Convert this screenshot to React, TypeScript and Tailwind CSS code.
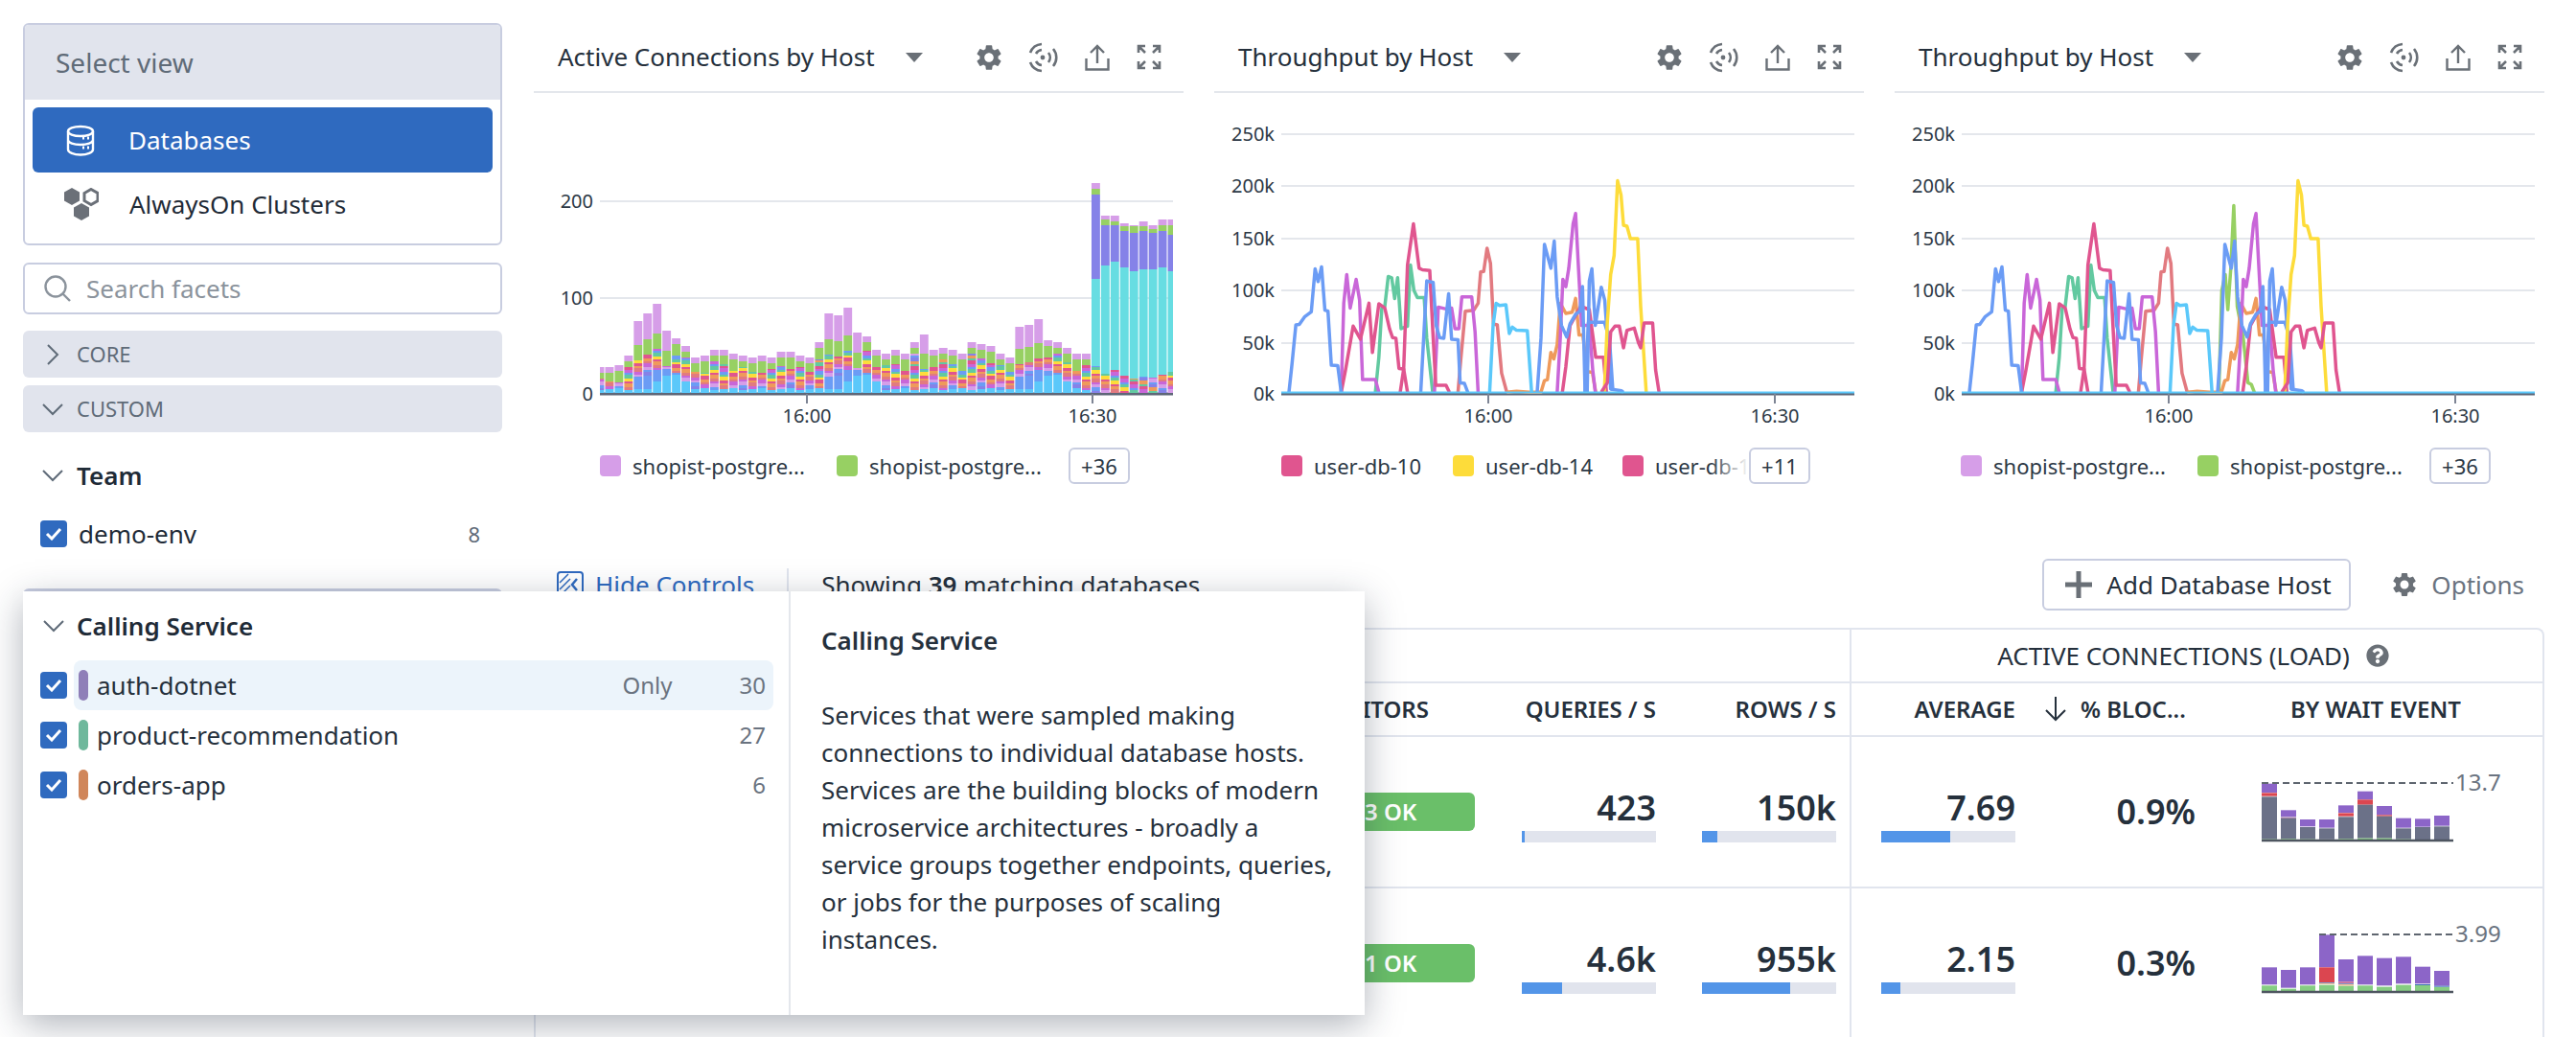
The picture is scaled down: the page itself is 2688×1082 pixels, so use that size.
import { FaQuestionCircle } from "react-icons/fa";
import { MdSettings } from "react-icons/md";

const c = {
  pink: "#d69ee8",
  green: "#97d063",
  teal: "#62c9a0",
  rose: "#e0558f",
  orange: "#ef9a5b",
  yellow: "#fddc3a",
  salmon: "#e27a80",
  purple: "#c966d8",
  blue: "#6b9cf5",
  sky: "#5bc8fa",
  indigo: "#8582e8",
  cyan: "#67dde2",
};

const totals = [
  27, 27, 29, 39, 75, 83, 93, 65, 57, 49, 37, 39, 45, 45, 41, 39, 37, 39, 37, 43, 43, 39, 37, 53, 83, 81, 89, 63, 59, 45,
  41, 45, 41, 53, 61, 45, 47, 45, 41, 53, 51, 49, 41, 37, 69, 71, 77, 55, 53, 47, 41, 41,
];

// teal top, indigo top, green top, total of the spike at the end of the chart
const spikes = [
  [119, 207, 213, 219, 28],
  [133, 175, 181, 185, 20],
  [137, 175, 179, 185, 24],
  [131, 169, 174, 177, 18],
  [127, 167, 174, 175, 15],
  [129, 169, 174, 179, 17],
  [129, 167, 171, 175, 16],
  [131, 169, 175, 181, 19],
  [127, 165, 175, 181, 22],
];

const strips = [c.indigo, c.blue, c.pink, c.purple, c.salmon, c.orange, c.rose, c.yellow, c.teal, c.blue, c.purple, c.rose, c.teal, c.orange];

type Seg = { h: number; color: string };

const blocks: Record<number, Seg[]> = {
  0: [{ h: 4, color: c.sky }, { h: 13, color: c.blue }],
  1: [{ h: 4, color: c.sky }, { h: 14, color: c.blue }],
  2: [{ h: 12, color: c.sky }, { h: 12, color: c.blue }],
  3: [{ h: 18, color: c.sky }, { h: 3, color: c.blue }],
  4: [{ h: 19, color: c.sky }, { h: 2, color: c.blue }],
  5: [{ h: 12, color: c.sky }],
};

function stack(i: number, total: number): Seg[] {
  const top = total >= 60 ? Math.round(total * 0.33) : 6;
  const green = total >= 60 ? 16 : 6 + (i % 3) * 3;
  const out: Seg[] = [];
  let left = total - top - green;
  const block = blocks[i % 20 >= 4 ? (i % 20) - 4 : 99];
  if (block) {
    block.forEach((s) => {
      out.push(s);
      left -= s.h;
    });
  } else {
    out.push({ h: 3 + (i % 3), color: c.sky });
    left -= 3 + (i % 3);
  }
  let n = (i * 3) % 5;
  while (left > 0) {
    const h = Math.min(left, 2 + ((i + n) * 7) % 3);
    out.push({ h, color: strips[n % strips.length] });
    left -= h;
    n++;
  }
  out.push({ h: green, color: c.green }, { h: top, color: c.pink });
  return out;
}

function spikeStack(i: number, s: number[]): Seg[] {
  const out: Seg[] = [];
  let left = s[4];
  let n = i * 2;
  while (left > 0) {
    const h = Math.min(left, 2 + (n * 5) % 3);
    out.push({ h, color: strips[n % strips.length] });
    left -= h;
    n++;
  }
  out.push(
    { h: s[0] - s[4], color: c.cyan },
    { h: s[1] - s[0], color: c.indigo },
    { h: s[2] - s[1], color: c.green },
    { h: s[3] - s[2], color: c.pink },
  );
  return out;
}

const base = 314;

function Axis({ left, right, grid, labels, ticks }: { left: number; right: number; grid: number[]; labels: string[]; ticks: number[] }) {
  return (
    <>
      {grid.map((y, i) => (
        <g key={y}>
          <line x1={left} x2={right} y1={y} y2={y} stroke="#e4e7ec" strokeWidth="2" />
          <text x={left - 7} y={y + 7} textAnchor="end" className="fill-[#2c3845] text-[20px]">
            {labels[i]}
          </text>
        </g>
      ))}
      <text x={left - 7} y={base + 7} textAnchor="end" className="fill-[#2c3845] text-[20px]">
        {labels[labels.length - 1]}
      </text>
      <line x1={left} x2={right} y1={base} y2={base} stroke="#5f6778" strokeWidth="3" />
      {ticks.map((x, i) => (
        <g key={x}>
          <line x1={x} x2={x} y1={base} y2={base + 10} stroke="#7d8494" strokeWidth="2" />
          <text x={x} y={base + 30} textAnchor="middle" className="fill-[#2c3845] text-[20px]">
            {i === 0 ? "16:00" : "16:30"}
          </text>
        </g>
      ))}
    </>
  );
}

function BarChart() {
  const all = [...totals.map((t, i) => stack(i, t)), ...spikes.map((s, i) => spikeStack(i, s))];
  return (
    <svg className="block" width="678" height="370">
      <Axis left={69} right={667} grid={[113, 214]} labels={["200", "100", "0"]} ticks={[285, 583]} />
      <clipPath id="plot">
        <rect x="69" y="0" width="598" height="313" />
      </clipPath>
      <g clipPath="url(#plot)">
        {all.map((segs, i) => {
          const x = 74.5 + (i - 1) * 9.95;
          let y = 313;
          return (
            <g key={i}>
              {segs.map((s, j) => {
                y -= s.h;
                return <rect key={j} x={x} y={y} width="8.9" height={s.h} fill={s.color} />;
              })}
            </g>
          );
        })}
      </g>
    </svg>
  );
}

// series traced in a 2.24 x 3.012 scaled space, mapped into the plot below
const lines: { color: string; pts: number[] }[] = [
  { color: "#e27a80", pts: [563, 1170, 570, 1060, 580, 915, 600, 912, 610, 890, 616, 792, 623, 790, 631, 717, 639, 765, 646, 955, 655, 958, 665, 1110, 677, 1170] },
  { color: "#ef9a5b", pts: [677, 1170, 700, 1167, 730, 1170, 757, 1170, 765, 1133, 772, 1130, 780, 1045, 787, 1065, 795, 1020, 802, 890, 815, 922, 830, 918, 838, 875, 846, 990, 855, 990, 865, 1105, 877, 1107, 885, 1170] },
  { color: "#62c9a0", pts: [370, 1170, 378, 1060, 385, 905, 392, 900, 400, 806, 408, 810, 415, 875, 422, 810, 430, 970, 445, 962, 452, 770, 460, 850, 468, 872, 484, 872, 490, 1000, 504, 1170] },
  { color: "#c966d8", pts: [290, 1170, 296, 890, 303, 800, 311, 905, 325, 815, 333, 880, 340, 1130, 370, 1130, 378, 1170] },
  { color: "#c966d8", pts: [508, 1170, 517, 902, 535, 908, 548, 905, 556, 970, 565, 970, 572, 870, 595, 870, 603, 980, 610, 1170] },
  { color: "#c966d8", pts: [795, 1170, 802, 1000, 808, 815, 815, 838, 822, 780, 832, 640, 838, 608, 845, 790, 852, 960, 870, 960, 878, 1100, 884, 1170] },
  { color: "#e0558f", pts: [290, 1170, 300, 1100, 318, 962, 335, 1003, 355, 890, 363, 1045, 378, 892, 392, 905, 403, 970, 410, 998, 418, 1000, 425, 1095, 436, 1097, 445, 1170] },
  { color: "#e0558f", pts: [428, 1170, 436, 1097, 445, 770, 459, 640, 472, 780, 480, 785, 497, 787, 505, 1000, 511, 1148, 535, 1148, 543, 1170] },
  { color: "#e0558f", pts: [807, 1170, 815, 1090, 825, 960, 850, 900, 870, 910, 885, 1060, 903, 1060, 910, 1170] },
  { color: "#5bc8fa", pts: [637, 1170, 645, 960, 652, 890, 660, 897, 675, 895, 683, 985, 690, 965, 700, 975, 725, 976, 735, 1170] },
  { color: "#6b9cf5", pts: [168, 1170, 175, 1080, 184, 958, 192, 957, 205, 932, 220, 917, 229, 782, 236, 822, 244, 776, 252, 912, 259, 915, 267, 1085, 282, 1086, 290, 1170] },
  { color: "#6b9cf5", pts: [476, 1170, 490, 820, 505, 825, 512, 960, 520, 998, 530, 1000, 541, 860, 548, 1003, 563, 1005, 568, 1140, 578, 1142, 586, 1170] },
  { color: "#6b9cf5", pts: [748, 1170, 757, 1000, 765, 705, 780, 780, 788, 695, 795, 870, 805, 960, 817, 996, 825, 955, 838, 925, 848, 915, 854, 838, 860, 1170] },
  { color: "#6b9cf5", pts: [865, 1170, 870, 820, 876, 782, 884, 960, 898, 840, 906, 880, 915, 1050, 920, 1160, 945, 1165, 950, 1170] },
  { color: "#6b9cf5", pts: [860, 1170, 868, 950, 905, 950, 917, 1000, 925, 1165] },
  { color: "#fddc3a", pts: [905, 1170, 912, 950, 920, 800, 928, 740, 936, 505, 944, 550, 950, 645, 958, 648, 966, 687, 983, 687, 990, 900, 1003, 1170] },
  { color: "#e0558f", pts: [898, 1170, 912, 1140, 920, 980, 930, 962, 940, 962, 950, 1030, 958, 975, 975, 968, 985, 1015, 990, 1030, 998, 952, 1018, 952, 1025, 1100, 1033, 1170] },
];

const extraGreen = [751, 1170, 758, 850, 766, 800, 772, 910, 779, 780, 786, 583, 794, 900, 808, 1000, 819, 1140, 827, 1145, 834, 1170];

function toPoints(pts: number[]) {
  const out: string[] = [];
  for (let i = 0; i < pts.length; i += 2) {
    out.push(`${(70 + (pts[i] - 150) / 2.24).toFixed(1)},${(314 - (1175 - pts[i + 1]) / 3.012).toFixed(1)}`);
  }
  return out.join(" ");
}

function LineChart({ extra }: { extra?: boolean }) {
  return (
    <svg className="block" width="678" height="370">
      <Axis left={70} right={668} grid={[43, 97, 152, 206, 261]} labels={["250k", "200k", "150k", "100k", "50k", "0k"]} ticks={[286, 585]} />
      {extra && <polyline points={toPoints(extraGreen)} fill="none" stroke="#97d063" strokeWidth="3.5" strokeLinejoin="round" />}
      {lines.map((l, i) => (
        <polyline key={i} points={toPoints(l.pts)} fill="none" stroke={l.color} strokeWidth="3.5" strokeLinejoin="round" />
      ))}
      <line x1="70" x2="668" y1="312.5" y2="312.5" stroke="#5bc8fa" strokeWidth="2" />
    </svg>
  );
}

function PanelIcons() {
  return (
    <div className="flex items-center gap-[28px] text-[#6a7077]">
      <MdSettings className="h-[32px] w-[32px] -mx-[3px]" />
      <svg width="31" height="32" viewBox="0 0 31 32" fill="none" stroke="currentColor" strokeWidth="2.6">
        <circle cx="15" cy="16" r="2.4" fill="currentColor" stroke="none" />
        <path d="M14 8a8 8 0 0 0-6 4M8 20a8 8 0 0 0 6 4M21 11a8 8 0 0 1 0 10" />
        <path d="M14 2A14 14 0 0 0 2 11M2 21a14 14 0 0 0 12 9M26 7a14 14 0 0 1 0 18" />
      </svg>
      <svg width="26" height="28" viewBox="0 0 26 28" fill="none" stroke="currentColor" strokeWidth="2.4">
        <path d="M13 20V2M6 9l7-7 7 7M1.500 15v11.500h23V15" />
      </svg>
      <svg width="26" height="27" viewBox="0 0 26 27" fill="none" stroke="currentColor" strokeWidth="2.6">
        <path d="M2 9V2h7M24 9V2h-7M2 18v7h7M24 18v7h-7M2 2l7 7M24 2l-7 7M2 25l7-7M24 25l-7-7" />
      </svg>
    </div>
  );
}

function Swatch({ color }: { color: string }) {
  return <span className="h-[22px] w-[22px] shrink-0 rounded-[4px]" style={{ backgroundColor: color }} />;
}

function MoreButton({ label, w }: { label: string; w: string }) {
  return (
    <span className={`flex h-[38px] items-center justify-center rounded-[6px] border-2 border-[#c8cde0] text-[22px] text-[#2c3845] ${w}`}>
      {label}
    </span>
  );
}

function Panel({ title, children, legend }: { title: string; children: React.ReactNode; legend: React.ReactNode }) {
  return (
    <div className="w-[678px] shrink-0">
      <div className="flex h-[73px] items-center justify-between border-b-2 border-[#e4e7ec] pl-[25px] pr-[23px]">
        <div className="flex items-center gap-[32px]">
          <span className="text-[26px] text-[#25303c]">{title}</span>
          <svg width="18" height="10" viewBox="0 0 18 10">
            <path d="M0 0h18L9 10z" fill="#6a7077" />
          </svg>
        </div>
        <PanelIcons />
      </div>
      {children}
      {legend}
    </div>
  );
}

function Legend({ names, more }: { names: [string, string]; more: string }) {
  return (
    <div className="flex h-[38px] items-center pl-[69px] text-[22px] text-[#2c3845]">
      <Swatch color={c.pink} />
      <span className="ml-[12px] w-[179px] whitespace-nowrap">{names[0]}</span>
      <span className="w-[34px]" />
      <Swatch color={c.green} />
      <span className="ml-[12px] w-[179px] whitespace-nowrap">{names[1]}</span>
      <span className="w-[29px]" />
      <MoreButton label={more} w="w-[64px]" />
    </div>
  );
}

function Check() {
  return (
    <span className="flex h-[28px] w-[28px] shrink-0 items-center justify-center rounded-[4px] bg-[#2f6abf]">
      <svg width="18" height="14" viewBox="0 0 18 14" fill="none" stroke="#fff" strokeWidth="3">
        <path d="M2 7l5 5L16 2" />
      </svg>
    </span>
  );
}

function Chevron({ open, cls }: { open: boolean; cls?: string }) {
  return (
    <svg className={cls} width="22" height="22" viewBox="0 0 22 22" fill="none" stroke="#5f6b78" strokeWidth="2">
      <path d={open ? "M1 6l10 10L21 6" : "M6 1l10 10L6 21"} />
    </svg>
  );
}

function Sidebar() {
  return (
    <aside className="w-[557px] shrink-0 pl-[24px] pr-[33px] pt-[24px]">
      <div className="overflow-hidden rounded-[6px] border-2 border-[#c8cde0]">
        <div className="flex h-[78px] items-center bg-[#e1e4ed] pl-[32px] text-[28px] text-[#5f6b78]">Select view</div>
        <div className="px-[8px] pb-[8px] pt-[8px]">
          <div className="flex h-[68px] items-center rounded-[6px] bg-[#2f6abf] text-[26px] text-white">
            <svg className="ml-[35px]" width="30" height="33" viewBox="0 0 30 33" fill="none" stroke="#fff" strokeWidth="2.4">
              <ellipse cx="15" cy="7" rx="13" ry="5" />
              <path d="M2 7v19c0 3 6 5.500 13 5.500S28 29 28 26V7M2 16c0 3 6 5 13 5s13-2 13-5" />
              <path d="M17 14h2M22 14h2M17 24h2M22 24h2" strokeWidth="3" />
            </svg>
            <span className="ml-[35px]">Databases</span>
          </div>
          <div className="flex h-[66px] items-center text-[26px] text-[#1f2b37]">
            <svg className="ml-[33px]" width="36" height="34" viewBox="0 0 36 34" fill="#6b7078">
              <path d="M8 0l8 4.500v9L8 18 0 13.500v-9z" />
              <path d="M28 1.500l7 4v8l-7 4-7-4v-8z" fill="none" stroke="#6b7078" strokeWidth="3" />
              <path d="M18 16l8 4.500v9L18 34l-8-4.500v-9z" />
            </svg>
            <span className="ml-[32px]">AlwaysOn Clusters</span>
          </div>
        </div>
      </div>
      <div className="mt-[18px] flex h-[54px] items-center rounded-[6px] border-2 border-[#c8cde0] pl-[20px] text-[26px] text-[#8b939c]">
        <svg width="28" height="28" viewBox="0 0 28 28" fill="none" stroke="#8b939c" strokeWidth="2.400">
          <circle cx="12" cy="12" r="10.500" />
          <path d="M19 19l8 8" />
        </svg>
        <span className="ml-[16px]">Search facets</span>
      </div>
      <div className="mt-[17px] flex h-[49px] items-center rounded-[6px] bg-[#e1e4ed] text-[22px] text-[#5f6b78]">
        <Chevron open={false} cls="ml-[20px]" />
        <span className="ml-[14px]">CORE</span>
      </div>
      <div className="mt-[8px] flex h-[49px] items-center rounded-[6px] bg-[#e1e4ed] text-[22px] text-[#5f6b78]">
        <Chevron open cls="ml-[20px]" />
        <span className="ml-[14px]">CUSTOM</span>
      </div>
      <div className="mt-[26px] flex h-[38px] items-center text-[26px] font-semibold text-[#1f2b37]">
        <Chevron open cls="ml-[20px]" />
        <span className="ml-[14px]">Team</span>
      </div>
      <div className="mt-[22px] flex h-[40px] items-center pl-[18px] pr-[23px] text-[26px] text-[#1f2b37]">
        <Check />
        <span className="ml-[12px] flex-1">demo-env</span>
        <span className="text-[22px] text-[#5f6b78]">8</span>
      </div>
      <div className="mt-[37px] h-[8px] rounded-t-[6px] bg-[#c8cde0]" />
    </aside>
  );
}

const facetRows = [
  { name: "auth-dotnet", color: "#8f7fb8", count: 30, hover: true },
  { name: "product-recommendation", color: "#6fb89c", count: 27, hover: false },
  { name: "orders-app", color: "#d0865a", count: 6, hover: false },
];

function Popup() {
  return (
    <div className="absolute left-[24px] top-[617px] flex h-[442px] w-[1400px] bg-white shadow-[0_10px_36px_rgba(30,40,60,0.35)]">
      <div className="w-[801px] shrink-0 border-r-2 border-[#e4e7ec] pl-[18px] pr-[16px] pt-[18px]">
        <div className="flex h-[36px] items-center text-[26px] font-semibold text-[#1f2b37]">
          <Chevron open cls="ml-[3px]" />
          <span className="ml-[13px]">Calling Service</span>
        </div>
        <div className="mt-[18px] flex flex-col">
          {facetRows.map((r) => (
            <div key={r.name} className="flex h-[52px] items-center">
              <Check />
              <div className={`ml-[7px] flex h-[52px] flex-1 items-center rounded-[8px] pr-[8px] ${r.hover ? "bg-[#ecf4fb]" : ""}`}>
                <span className="ml-[5px] h-[32px] w-[10px] rounded-[5px]" style={{ backgroundColor: r.color }} />
                <span className="ml-[9px] flex-1 text-[26px] text-[#25303c]">{r.name}</span>
                {r.hover && <span className="mr-[70px] text-[24px] text-[#6a7380]">Only</span>}
                <span className="text-[24px] text-[#6a7380]">{r.count}</span>
              </div>
            </div>
          ))}
        </div>
      </div>
      <div className="flex-1 pl-[32px] pr-[28px] pt-[32px] text-[26px] leading-[39px] text-[#25303c]">
        <div className="font-semibold">Calling Service</div>
        <p className="mt-[39px]">
          Services that were sampled making connections to individual database hosts. Services are the building blocks of
          modern microservice architectures - broadly a service groups together endpoints, queries, or jobs for the purposes
          of scaling instances.
        </p>
      </div>
    </div>
  );
}

function Meter({ value, fill, w = "w-[140px]" }: { value: string; fill: number; w?: string }) {
  return (
    <div className={`ml-auto flex flex-col items-end pt-[6px] ${w}`}>
      <span className="text-[36px] font-semibold leading-[44px] text-[#25303c]">{value}</span>
      <div className="mt-[2px] h-[12px] w-full bg-[#e1e4ed]">
        <div className="h-full bg-[#5395e8]" style={{ width: fill }} />
      </div>
    </div>
  );
}

type SparkSeg = [number, number, string];
const P = "#8c65c8";
const G = "#6b7188";
const R = "#db4650";
const L = "#86cd82";
const B = "#3f6fb8";
const O = "#ef9a5b";

// y ranges read at 3x, baseline at the end
const spark1: SparkSeg[][] = [
  [[112, 140, P], [141, 151, R], [153, 286, G], [286, 290, L]],
  [[195, 216, P], [217, 221, "#a986a8"], [221, 285, G], [285, 290, L]],
  [[224, 246, P], [248, 286, G], [286, 290, L]],
  [[224, 250, P], [252, 286, G], [286, 290, G]],
  [[180, 203, P], [204, 214, R], [216, 285, G], [285, 290, L]],
  [[136, 162, P], [162, 178, R], [178, 283, G], [283, 290, L]],
  [[182, 210, P], [210, 214, R], [214, 283, G], [283, 290, L]],
  [[220, 250, P], [252, 286, G], [286, 290, L]],
  [[222, 247, P], [248, 290, G]],
  [[212, 244, P], [246, 290, G]],
];
const spark2: SparkSeg[][] = [
  [[688, 742, P], [745, 765, L]],
  [[696, 752, P], [755, 765, L]],
  [[688, 742, P], [745, 765, L]],
  [[586, 688, P], [688, 735, R], [736, 738, B], [739, 741, O], [743, 765, L]],
  [[663, 733, P], [733, 738, "#c86a98"], [739, 741, B], [742, 745, O], [746, 765, L]],
  [[652, 742, P], [745, 765, L]],
  [[659, 745, P], [749, 765, L]],
  [[655, 739, P], [743, 765, L]],
  [[686, 739, P], [741, 744, B], [744, 765, L]],
  [[699, 746, P], [746, 749, B], [750, 765, L]],
];

function Spark({ bars, label, dashFrom, origin }: { bars: SparkSeg[][]; label: string; dashFrom: number; origin: number }) {
  return (
    <svg className="block" width="256" height="76" viewBox="0 0 256 76">
      {bars.map((segs, i) =>
        segs.map(([a, b, col], j) => (
          <rect key={`${i}-${j}`} x={i * 20} y={(a - origin) / 3 + 12} width="16" height={(b - a) / 3} fill={col} />
        )),
      )}
      <line x1={dashFrom} x2="200" y1="12" y2="12" stroke="#5f6670" strokeWidth="2" strokeDasharray="7 4" />
      <line x1="0" x2="200" y1="72" y2="72" stroke="#4e5560" strokeWidth="2.5" />
      <text x="202" y="20" className="fill-[#6a7380] text-[24px]">
        {label}
      </text>
    </svg>
  );
}

function Row({ pill, q, qf, r, rf, avg, avgf, pct, spark }: { pill: string; q: string; qf: number; r: string; rf: number; avg: string; avgf: number; pct: string; spark: React.ReactNode }) {
  return (
    <div className="grid h-[158px] grid-cols-[741px_260px_188px_182px_192px_217px_1fr] items-center border-t-2 border-[#e1e5ee]">
      <div />
      <div className="pr-[21px]">
        <div className="ml-auto flex h-[40px] w-[180px] items-center rounded-[6px] bg-[#6abf69] pl-[65px] text-[24px] font-semibold text-white">{pill}</div>
      </div>
      <div className="pr-[20px]"><Meter value={q} fill={qf} /></div>
      <div className="pr-[14px]"><Meter value={r} fill={rf} /></div>
      <div className="flex h-full items-center border-l-2 border-[#e1e5ee] pr-[19px]"><Meter value={avg} fill={avgf} /></div>
      <div className="pr-[48px] text-right text-[36px] font-semibold text-[#25303c]">{pct}</div>
      <div className="pb-[8px] pl-[21px]">{spark}</div>
    </div>
  );
}

function Table() {
  const head = "text-[24px] font-semibold text-[#25303c]";
  return (
    <div className="mt-[18px] w-[2098px] rounded-tr-[8px] border-x-2 border-t-2 border-[#e1e5ee]">
      <div className="flex h-[54px]">
        <div className="w-[1371px]" />
        <div className="flex flex-1 items-center justify-center gap-[17px] border-l-2 border-[#e1e5ee] pr-[8px] text-[26px] text-[#25303c]">
          ACTIVE CONNECTIONS (LOAD)
          <FaQuestionCircle className="h-[24px] w-[24px] text-[#6a7077]" />
        </div>
      </div>
      <div className="grid h-[56px] grid-cols-[741px_260px_188px_182px_192px_217px_1fr] items-center border-t-2 border-[#e1e5ee]">
        <div />
        <div className={`${head} pr-[69px] text-right`}>MONITORS</div>
        <div className={`${head} pr-[20px] text-right`}>QUERIES / S</div>
        <div className={`${head} pr-[14px] text-right`}>ROWS / S</div>
        <div className={`${head} flex h-full items-center justify-end border-l-2 border-[#e1e5ee] pr-[19px]`}>AVERAGE</div>
        <div className={`${head} flex items-center`}>
          <svg className="ml-[12px]" width="22" height="26" viewBox="0 0 22 26" fill="none" stroke="#25303c" strokeWidth="2">
            <path d="M11 0v24M1 14l10 10 10-10" />
          </svg>
          <span className="ml-[15px]">% BLOC...</span>
        </div>
        <div className={`${head} pl-[51px]`}>BY WAIT EVENT</div>
      </div>
      <Row
        pill="3 OK"
        q="423"
        qf={3}
        r="150k"
        rf={16}
        avg="7.69"
        avgf={72}
        pct="0.9%"
        spark={<Spark bars={spark1} label="13.7" dashFrom={0} origin={110} />}
      />
      <Row
        pill="1 OK"
        q="4.6k"
        qf={42}
        r="955k"
        rf={92}
        avg="2.15"
        avgf={20}
        pct="0.3%"
        spark={<Spark bars={spark2} label="3.99" dashFrom={60} origin={585} />}
      />
    </div>
  );
}

export default function App() {
  return (
    <div className="relative flex h-[1082px] w-[2688px] overflow-hidden bg-white font-['Noto_Sans',sans-serif]">
      <Sidebar />
      <main className="flex-1 pt-[24px]">
        <div className="flex gap-[32px]">
          <Panel
            title="Active Connections by Host"
            legend={<Legend names={["shopist-postgre...", "shopist-postgre..."]} more="+36" />}
          >
            <BarChart />
          </Panel>
          <Panel
            title="Throughput by Host"
            legend={
              <div className="flex h-[38px] items-center pl-[70px] text-[22px] text-[#2c3845]">
                <Swatch color={c.rose} />
                <span className="ml-[12px] w-[145px] whitespace-nowrap">user-db-10</span>
                <Swatch color={c.yellow} />
                <span className="ml-[12px] w-[143px] whitespace-nowrap">user-db-14</span>
                <Swatch color={c.rose} />
                <span className="relative ml-[12px] w-[98px] overflow-hidden whitespace-nowrap">
                  user-db-10
                  <span className="absolute inset-y-0 right-0 w-[40px] bg-gradient-to-r from-transparent to-white" />
                </span>
                <MoreButton label="+11" w="w-[64px]" />
              </div>
            }
          >
            <LineChart />
          </Panel>
          <Panel
            title="Throughput by Host"
            legend={<Legend names={["shopist-postgre...", "shopist-postgre..."]} more="+36" />}
          >
            <LineChart extra />
          </Panel>
        </div>
        <div className="mt-[78px] flex h-[54px] items-center pr-[54px] text-[26px]">
          <svg className="ml-[24px]" width="28" height="28" viewBox="0 0 28 28" fill="none" stroke="#2f6abf" strokeWidth="2">
            <rect x="1" y="1" width="26" height="26" rx="3" />
            <path d="M3 12l9-9M3 19L14 8M3 26L14 15" strokeWidth="1.500" />
            <path d="M21 8l-5 6 5 6" strokeWidth="2.500" />
          </svg>
          <span className="ml-[12px] text-[#2f6abf]">Hide Controls</span>
          <span className="ml-[34px] h-[34px] w-[2px] bg-[#e1e5ee]" />
          <span className="ml-[34px] text-[#25303c]">
            Showing <b className="font-semibold">39</b> matching databases
          </span>
          <div className="ml-auto flex h-[54px] w-[322px] items-center rounded-[6px] border-2 border-[#c8cde0] pl-[22px] text-[26px] text-[#25303c]">
            <svg width="28" height="28" viewBox="0 0 28 28" fill="#6a7077">
              <path d="M11.500 0h5v11.500H28v5H16.500V28h-5V16.500H0v-5h11.500z" />
            </svg>
            <span className="ml-[15px]">Add Database Host</span>
          </div>
          <MdSettings className="ml-[41px] h-[30px] w-[30px] text-[#6a7077]" />
          <span className="ml-[13px] text-[#6a7380]">Options</span>
        </div>
        <Table />
      </main>
      <Popup />
    </div>
  );
}
